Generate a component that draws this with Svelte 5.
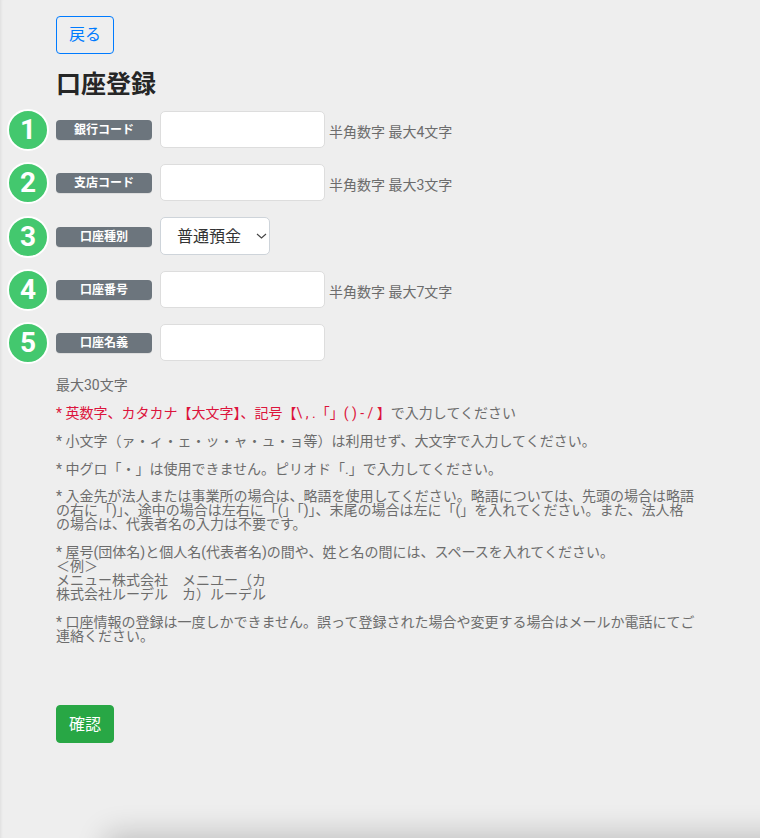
<script>
  const rows = [
    { n: 1, label: '銀行コード', hint: '半角数字 最大4文字' },
    { n: 2, label: '支店コード', hint: '半角数字 最大3文字' },
    { n: 3, label: '口座種別', select: true },
    { n: 4, label: '口座番号', hint: '半角数字 最大7文字' },
    { n: 5, label: '口座名義' }
  ];
</script>

<div class="page">
  <button class="back" type="button">戻る</button>
  <h1>口座登録</h1>

  <div class="rows">
    {#each rows as r}
      <div class="row">
        <span class="num">{r.n}</span>
        <span class="badge">{r.label}</span>
        {#if r.select}
          <span class="selwrap">
            <select class="sel"><option>普通預金</option><option>当座預金</option></select>
            <svg class="chev" width="11" height="6" viewBox="0 0 11 6" aria-hidden="true">
              <path d="M1 1l4.5 4L10 1" fill="none" stroke="#444" stroke-width="1.1" />
            </svg>
          </span>
        {:else}
          <input class="inp" type="text" />
        {/if}
        {#if r.hint}<small class="hint">{r.hint}</small>{/if}
      </div>
    {/each}
  </div>

  <div class="notes">
    <p>最大30文字</p>
    <p><span class="red">* 英数字、カタカナ【大文字】、記号【\ , .「」( ) - / 】</span>で入力してください</p>
    <p>* 小文字（ァ・ィ・ェ・ッ・ャ・ュ・ョ等）は利用せず、大文字で入力してください。</p>
    <p class="tight">* 中グロ「・」は使用できません。ピリオド「.」で入力してください。</p>
    <p>* 入金先が法人または事業所の場合は、略語を使用してください。略語については、先頭の場合は略語の右に「)」、途中の場合は左右に「(」「)」、末尾の場合は左に「(」を入れてください。また、法人格の場合は、代表者名の入力は不要です。</p>
    <p>* 屋号(団体名)と個人名(代表者名)の間や、姓と名の間には、スペースを入れてください。<br />＜例＞<br />メニュー株式会社　メニユー（カ<br />株式会社ルーデル　カ）ルーデル</p>
    <p>* 口座情報の登録は一度しかできません。誤って登録された場合や変更する場合はメールか電話にてご連絡ください。</p>
  </div>

  <button class="ok" type="button">確認</button>
  <div class="shade"></div>
</div>

<style>
  :global(body) {
    margin: 0;
    background: #eee;
    overflow: hidden;
  }
  .page {
    position: relative;
    box-sizing: border-box;
    height: 838px;
    overflow: hidden;
    padding: 16px 0 0 56px;
    background: #eee;
    box-shadow: inset 3px 0 3px -2px rgba(0, 0, 0, 0.07);
    font-family: Roboto, "Noto Sans CJK JP", sans-serif;
    color: #212529;
  }
  button {
    display: block;
    box-sizing: border-box;
    width: 58px;
    height: 38px;
    padding: 0;
    border-radius: 4px;
    font-family: inherit;
    font-size: 16px;
    line-height: 1.5;
  }
  .back {
    background: transparent;
    border: 1px solid #007bff;
    color: #007bff;
  }
  h1 {
    margin: 15px 0 0;
    font-size: 25px;
    line-height: 32px;
    font-weight: 700;
    color: #262626;
  }
  .rows {
    display: flex;
    flex-direction: column;
    gap: 16px;
    margin: 10px 0 0 -49px;
  }
  .row {
    display: flex;
    align-items: center;
    height: 37px;
  }
  .row:has(.sel) {
    height: 38px;
  }
  .num {
    box-sizing: border-box;
    flex: none;
    width: 42px;
    height: 42px;
    margin: 1px 7px 0 0;
    border: 2px solid #fff;
    border-radius: 50%;
    background: #43c86e;
    color: #fff;
    font-size: 28px;
    font-weight: 700;
    line-height: 38px;
    text-align: center;
  }
  .badge {
    box-sizing: border-box;
    flex: none;
    width: 96px;
    height: 20px;
    margin: 1px 8px 0 0;
    border-radius: 4px;
    background: #6c757d;
    color: #fff;
    font-size: 12px;
    font-weight: 700;
    line-height: 20px;
    text-align: center;
    box-shadow: 0 1px 0 #ddd;
  }
  .inp {
    box-sizing: border-box;
    width: 165px;
    height: 37px;
    padding: 6px 12px;
    border: 1px solid #ddd;
    border-radius: 5px;
    background: #fff;
  }
  .selwrap {
    position: relative;
    display: block;
    width: 110px;
    height: 38px;
  }
  .sel {
    display: block;
    box-sizing: border-box;
    width: 110px;
    height: 38px;
    padding: 0 0 0 16px;
    border: 1px solid #ced4da;
    border-radius: 5px;
    background: #fff;
    color: #333;
    font-family: inherit;
    font-size: 16px;
    appearance: none;
    -webkit-appearance: none;
  }
  .chev {
    position: absolute;
    top: 16px;
    right: 3px;
    pointer-events: none;
  }
  .hint {
    margin: 2px 0 0 4px;
    font-size: 14px;
    color: #6c6c6c;
  }
  .notes {
    width: 640px;
    margin-top: 17px;
    font-size: 14px;
    line-height: 14px;
    color: #6c6c6c;
  }
  .notes p {
    margin: 0 0 14px;
  }
  .notes p.tight {
    margin-bottom: 13px;
  }
  .red {
    color: #dc143c;
  }
  .ok {
    margin-top: 62px;
    padding-top: 1px;
    background: #28a745;
    border: 1px solid #28a745;
    color: #fff;
  }
  .shade {
    position: absolute;
    left: 110px;
    right: -40px;
    top: 838px;
    height: 40px;
    box-shadow: 0 0 30px 4px rgba(0, 0, 0, 0.2);
  }
</style>
